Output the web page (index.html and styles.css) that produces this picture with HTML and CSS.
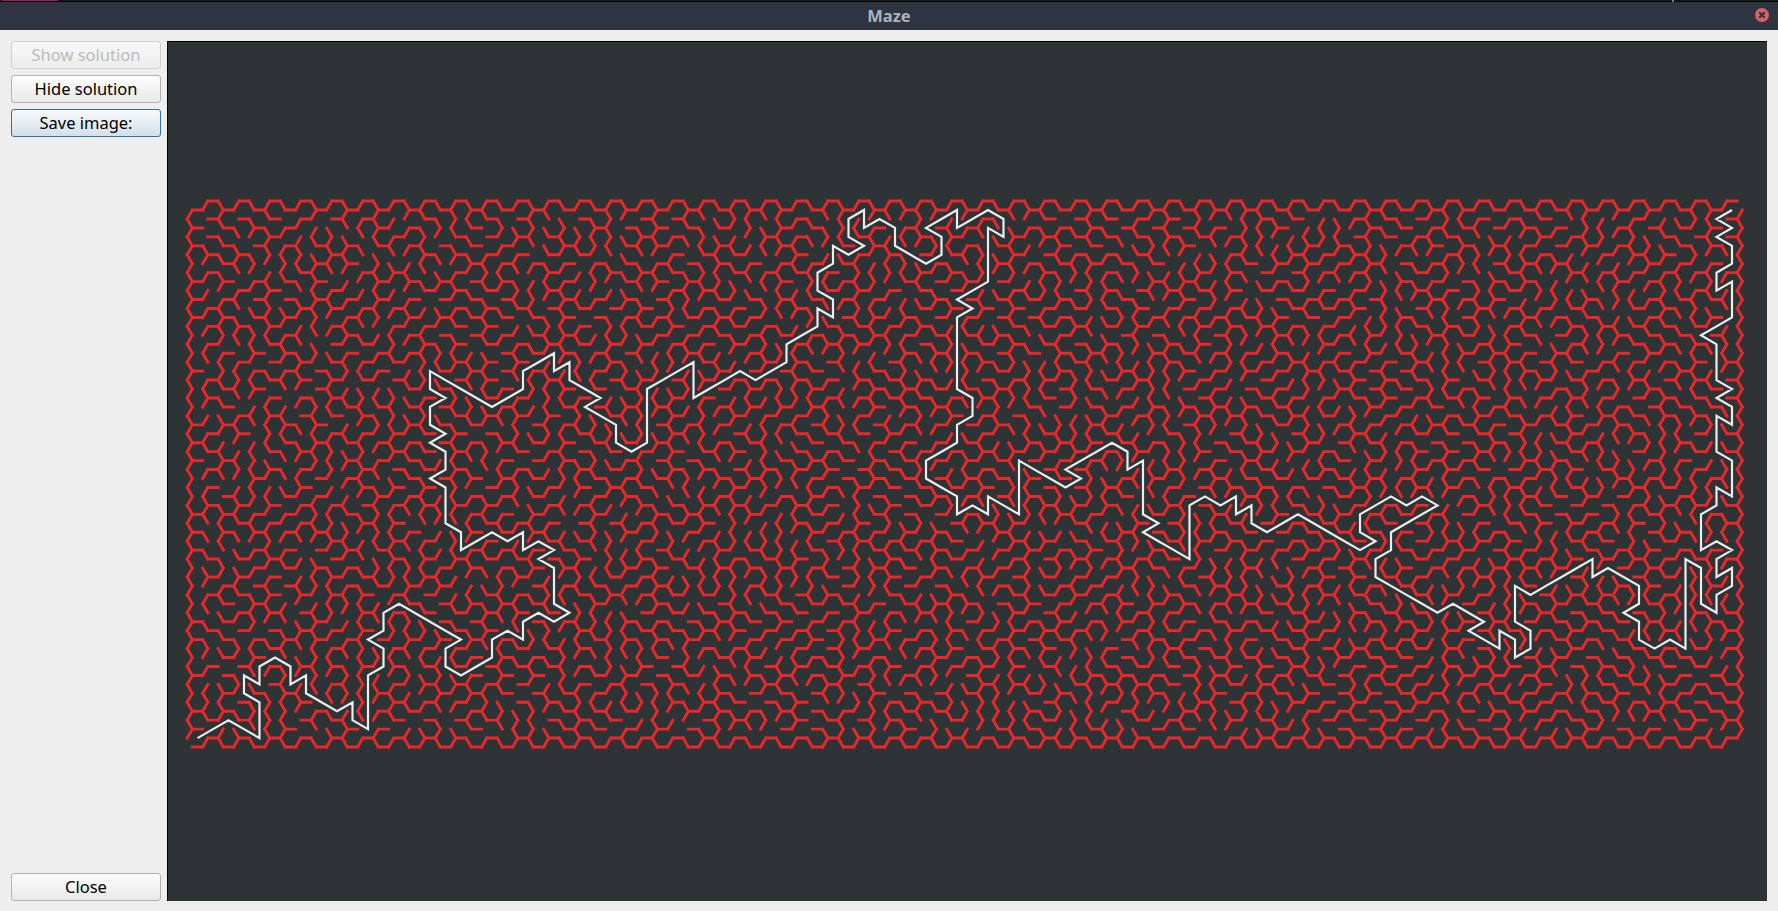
FILE: index.html
```html
<!DOCTYPE html>
<html lang="en">
<head>
<meta charset="utf-8">
<title>Maze</title>
<link rel="stylesheet" href="styles.css">
</head>
<body>
<div class="screen-strip"><span class="strip-accent"></span><span class="strip-tick"></span></div>
<header class="titlebar">
  <span class="title">Maze</span>
  <span class="close-dot" aria-label="Close window">
    <svg class="close-x" viewBox="0 0 14 14" width="14" height="14"><path d="M4.2 4.2 9.8 9.8M9.8 4.2 4.2 9.8"/></svg>
  </span>
</header>
<main class="content">
  <aside class="sidebar">
    <button class="btn" disabled>Show solution</button>
    <button class="btn">Hide solution</button>
    <button class="btn btn-focus">Save image:</button>
    <button class="btn btn-close">Close</button>
  </aside>
  <section class="canvas">
    <svg class="maze" viewBox="168 42 1599 859" preserveAspectRatio="xMinYMin">
      <path id="walls" class="walls" d=""/>
      <polyline id="solution" class="solution" points=""/>
    </svg>
  </section>
</main>
<script src="script.js"></script>
</body>
</html>
```
FILE: styles.css
```css
* { box-sizing: border-box; }
html, body { margin: 0; height: 100%; }
body {
  display: flex;
  flex-direction: column;
  width: 1778px;
  height: 911px;
  overflow: hidden;
  background: #eeeeee;
  font-family: "Noto Sans", "Open Sans", sans-serif;
}
.screen-strip {
  position: relative;
  flex: 0 0 2px;
  background: #17181c;
  border-bottom: 1px solid #000;
}
.strip-accent {
  position: absolute;
  left: 2px;
  top: 0;
  width: 56px;
  height: 1px;
  background: #a01c6c;
}
.strip-tick {
  position: absolute;
  left: 1672px;
  top: 0;
  width: 2px;
  height: 2px;
  background: #77797e;
}
.titlebar {
  position: relative;
  flex: 0 0 28px;
  display: flex;
  align-items: center;
  justify-content: center;
  background: #2f3441;
}
.title {
  color: #aab2c0;
  font-size: 16.5px;
  font-weight: 700;
  line-height: 24px;
  margin-top: -1px;
}
.close-dot {
  position: absolute;
  right: 9px;
  top: 6px;
  width: 14px;
  height: 14px;
  border-radius: 50%;
  background: #dc5f69;
}
.close-x { display: block; }
.close-x path {
  fill: none;
  stroke: #2f3441;
  stroke-width: 2;
}
.content {
  flex: 1;
  display: flex;
  padding: 11px 11px 10px 11px;
  gap: 6px;
  min-height: 0;
}
.sidebar {
  flex: 0 0 150px;
  display: flex;
  flex-direction: column;
  gap: 6px;
}
.btn {
  height: 28px;
  padding: 0 0 1px;
  border: 1px solid #b2b2b2;
  border-radius: 3px;
  background: linear-gradient(#fcfcfc, #e9e9e9);
  color: #000;
  font-family: inherit;
  font-size: 16.5px;
  line-height: 24px;
}
.btn:disabled {
  border-color: #cfcfcf;
  background: linear-gradient(#f8f8f8, #ececec);
  color: #bcbcbc;
}
.btn-focus {
  border-color: #2d72a6;
  background: linear-gradient(#f8fafb, #d4dfe9);
}
.btn-close { margin-top: auto; }
.canvas {
  flex: 1;
  min-width: 0;
  border-top: 1px solid #000;
  border-left: 1px solid #000;
  background: #2e3336;
}
.maze {
  display: block;
  width: 100%;
  height: 100%;
}
.walls {
  fill: none;
  stroke: #e8282a;
  stroke-width: 2.9;
  stroke-linecap: square;
}
.solution {
  fill: none;
  stroke: #ececec;
  stroke-width: 2.2;
  stroke-linejoin: miter;
}
```
FILE: script.js
```js
(function () {
  var COLS = 100, ROWS = 30;
  var X0 = 197.5, DX = 15.5, Y0 = 219, DY = 17.9;
  var S = 10.33, H = 8.95;

  var trace = [196.7,738.3,227.7,719.3,258.3,738.3,258.3,701.7,243.3,692.7,243.3,674.3,258.3,683.3,258.3,665.7,274.3,656.7,289.3,665.7,289.3,684,305,674.3,305,692.7,336,711,351.7,701.7,351.7,719.3,367.3,729,367.3,674.3,382.7,665.7,382.7,647.3,367.3,638.3,382.7,629.3,382.7,611.7,398.3,602.3,461,638.7,444.3,648.3,444.3,666,460.3,675.3,491.3,657,491.3,638.7,506.7,629.3,522.3,638.7,522.3,620.7,537.3,611.7,553,621.3,569,611.7,553.3,602.7,553.3,568,537,558.7,553.3,550,537.3,540.7,522.3,550,522.3,531.7,506.7,541.3,491.3,531.7,460.3,550,460.3,531.7,444.3,522.7,444.3,486.7,429,477.7,444.3,469,444.3,450.7,429,441.7,444.3,432.7,429,425,429,406.7,444.3,397.7,429,389,429,370.7,491.3,407.3,522.7,389,522.7,370.7,553.3,352.7,553.3,371,568.3,361.7,568.3,380,600,397.7,584,406.7,615,425,615,441.7,630.7,451,646.7,441.7,646.7,389,692.3,361.7,692.3,398.3,739,370.7,754.3,380.3,785,362.3,785,344,816,326,816,307.7,832.7,317.3,832.7,299,816,289.3,816,271.7,831.7,262.7,831.7,245.7,847.3,255,863.3,245.7,847.3,236.7,847.3,218.3,863.3,209.3,863.3,228.3,878.3,218.3,894,227.7,894,245.7,925.7,263.3,940.7,255,940.7,236.7,925.7,227.7,956.3,209.3,956.3,227.7,987.3,209.3,1002.7,218.3,1002.7,236.7,987.3,227.7,987.3,281,956,299,971.7,307.7,956.3,316.7,956.3,389,971.7,397.7,971.7,416,956.3,425,956.3,441.7,925,460,925,478.3,956.7,496,956.7,514,971.3,504.3,987.7,514,987.7,496,1018.3,514,1018.3,460,1064,487.3,1080.7,478.3,1064,469,1111,441.7,1126.7,450.7,1126.7,469,1142.3,460,1142.3,514,1157.7,522.7,1142.3,532,1188.3,559,1188.3,504.3,1204.3,495.7,1219,505,1235.3,495.3,1235.3,514,1250.7,504.3,1250.7,522.7,1266,532.3,1297.3,513.3,1359.3,550,1375,541,1359.3,532,1359.3,513.3,1390,495.3,1405.7,505,1421,495.3,1436.7,504.3,1390,531.7,1390,550,1374.3,559.3,1374.3,577.3,1436.7,612.3,1451.7,602.3,1484,620.7,1467.3,630,1498.3,648.3,1498.3,630,1514.3,639,1514.3,657,1530,647.7,1530,630,1514.3,620.7,1514.3,585.7,1529.3,595.3,1590.7,559,1590.7,576.7,1606.7,567.7,1638.3,586,1638.3,603.3,1622.3,612.3,1638.3,620.7,1638.3,639,1653.3,648.3,1669,639,1684.3,648.3,1684.3,558.3,1700,567.7,1700,603.3,1715.7,612.3,1715.7,594.3,1731.7,585,1731.7,567.7,1715.7,576.7,1715.7,558.3,1731.7,549.3,1715.7,540,1700,550,1700,513.3,1715.7,505,1715.7,486.7,1731.7,496.7,1731.7,460,1715.7,451,1715.7,416,1731.7,425.7,1731.7,406.7,1715.7,397.3,1731.7,389,1715.7,380,1715.7,344,1700,335,1731.7,317.3,1731.7,280.7,1715,290,1715,272.7,1731.7,263.3,1731.7,246,1715,236.7,1731.7,227.7,1715,218.3,1731.7,209.3];

  function cx(i) { return X0 + i * DX; }
  function cy(i, j) { return Y0 + j * DY - (i % 2 ? 9 : 0); }
  function id(i, j) { return j * COLS + i; }
  function inside(i, j) { return i >= 0 && i < COLS && j >= 0 && j < ROWS; }

  // Neighbour offsets by direction: N, NE, SE, S, SW, NW
  function neighbour(i, j, d) {
    var odd = i % 2;
    switch (d) {
      case 0: return [i, j - 1];
      case 1: return [i + 1, odd ? j - 1 : j];
      case 2: return [i + 1, odd ? j : j + 1];
      case 3: return [i, j + 1];
      case 4: return [i - 1, odd ? j : j + 1];
      default: return [i - 1, odd ? j - 1 : j];
    }
  }
  var CORNER = [
    [-S / 2, -H, S / 2, -H], [S / 2, -H, S, 0], [S, 0, S / 2, H],
    [S / 2, H, -S / 2, H], [-S / 2, H, -S, 0], [-S, 0, -S / 2, -H]
  ];

  function snap(x, y) {
    var i = Math.round((x - X0) / DX);
    var j = Math.round((y - Y0 + (i % 2 ? 9 : 0)) / DY);
    return [i, j];
  }

  // Expand the traced turning points into a run of adjacent cells.
  var route = [snap(trace[0], trace[1])];
  for (var t = 2; t < trace.length; t += 2) {
    var goal = snap(trace[t], trace[t + 1]);
    var cur = route[route.length - 1], guard = 0;
    while ((cur[0] !== goal[0] || cur[1] !== goal[1]) && guard++ < 100) {
      var next;
      if (cur[0] === goal[0]) {
        next = neighbour(cur[0], cur[1], goal[1] < cur[1] ? 0 : 3);
      } else {
        var up = cy(goal[0], goal[1]) < cy(cur[0], cur[1]);
        var right = goal[0] > cur[0];
        next = neighbour(cur[0], cur[1], right ? (up ? 1 : 2) : (up ? 5 : 4));
      }
      route.push(next);
      cur = next;
    }
  }

  var parent = [];
  for (var p = 0; p < COLS * ROWS; p++) parent[p] = p;
  function find(a) {
    while (parent[a] !== a) { parent[a] = parent[parent[a]]; a = parent[a]; }
    return a;
  }
  var open = {};
  function key(a, b) { return a < b ? a + "_" + b : b + "_" + a; }
  function link(a, b) {
    var ra = find(a), rb = find(b);
    if (ra === rb) return;
    parent[ra] = rb;
    open[key(a, b)] = true;
  }

  for (var r = 1; r < route.length; r++) {
    link(id(route[r - 1][0], route[r - 1][1]), id(route[r][0], route[r][1]));
  }

  // Seeded randomised Kruskal for the rest of the maze.
  var seed = 20240611;
  function rnd() {
    seed = (seed * 1664525 + 1013904223) >>> 0;
    return seed / 4294967296;
  }
  var edges = [];
  for (var c = 0; c < COLS; c++) {
    for (var w = 0; w < ROWS; w++) {
      for (var d = 0; d < 3; d++) {
        var n = neighbour(c, w, d);
        if (inside(n[0], n[1])) edges.push([id(c, w), id(n[0], n[1])]);
      }
    }
  }
  for (var e = edges.length - 1; e > 0; e--) {
    var k = Math.floor(rnd() * (e + 1));
    var tmp = edges[e]; edges[e] = edges[k]; edges[k] = tmp;
  }
  edges.forEach(function (pair) { link(pair[0], pair[1]); });

  var start = route[0], end = route[route.length - 1];
  var d3 = [];
  function seg(i, j, dir) {
    var x = cx(i), y = cy(i, j), q = CORNER[dir];
    d3.push("M" + (x + q[0]).toFixed(2) + " " + (y + q[1]).toFixed(2) +
            "L" + (x + q[2]).toFixed(2) + " " + (y + q[3]).toFixed(2));
  }
  for (var a = 0; a < COLS; a++) {
    for (var b = 0; b < ROWS; b++) {
      for (var dir = 0; dir < 6; dir++) {
        if (a === start[0] && b === start[1] && dir === 4) continue;
        if (a === end[0] && b === end[1] && dir === 1) continue;
        var m = neighbour(a, b, dir);
        if (!inside(m[0], m[1])) { seg(a, b, dir); continue; }
        if (dir < 3 && !open[key(id(a, b), id(m[0], m[1]))]) seg(a, b, dir);
      }
    }
  }
  document.getElementById("walls").setAttribute("d", d3.join(""));
  document.getElementById("solution").setAttribute("points", route.map(function (q) {
    return cx(q[0]).toFixed(2) + "," + cy(q[0], q[1]).toFixed(2);
  }).join(" "));
})();
```
